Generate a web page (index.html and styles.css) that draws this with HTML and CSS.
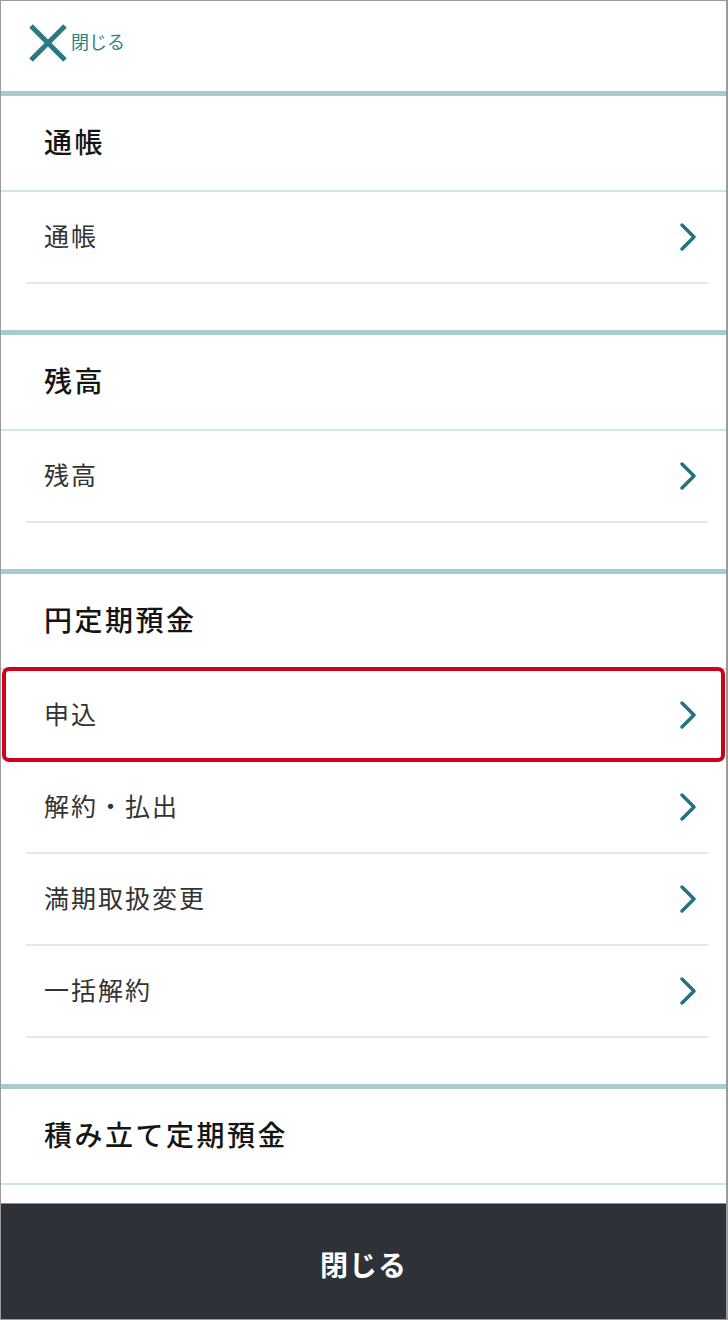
FILE: index.html
```html
<!DOCTYPE html>
<html lang="ja">
<head>
<meta charset="utf-8">
<link rel="stylesheet" href="styles.css">
</head>
<body>
<div class="frame">
  <div class="scroll">
    <div class="topbar">
      <a class="close-link">
        <svg class="close-x" width="40" height="38" viewBox="0 0 40 38"><path d="M3 2 L37 36 M37 2 L3 36" stroke="#2a7a84" stroke-width="5" fill="none"/></svg>
        <span class="close-text">閉じる</span>
      </a>
    </div>

    <section class="group">
      <h2 class="group-title">通帳</h2>
      <ul class="items">
        <li class="item"><span>通帳</span><svg class="chev" width="18" height="28" viewBox="0 0 18 28"><path d="M3 2 L15 14 L3 26" stroke="#23727d" stroke-width="3.4" fill="none" stroke-linecap="round" stroke-linejoin="round"/></svg></li>
      </ul>
    </section>

    <section class="group">
      <h2 class="group-title">残高</h2>
      <ul class="items">
        <li class="item"><span>残高</span><svg class="chev" width="18" height="28" viewBox="0 0 18 28"><path d="M3 2 L15 14 L3 26" stroke="#23727d" stroke-width="3.4" fill="none" stroke-linecap="round" stroke-linejoin="round"/></svg></li>
      </ul>
    </section>

    <section class="group">
      <h2 class="group-title">円定期預金</h2>
      <ul class="items">
        <li class="item"><span>申込</span><svg class="chev" width="18" height="28" viewBox="0 0 18 28"><path d="M3 2 L15 14 L3 26" stroke="#23727d" stroke-width="3.4" fill="none" stroke-linecap="round" stroke-linejoin="round"/></svg></li>
        <li class="item"><span>解約・払出</span><svg class="chev" width="18" height="28" viewBox="0 0 18 28"><path d="M3 2 L15 14 L3 26" stroke="#23727d" stroke-width="3.4" fill="none" stroke-linecap="round" stroke-linejoin="round"/></svg></li>
        <li class="item"><span>満期取扱変更</span><svg class="chev" width="18" height="28" viewBox="0 0 18 28"><path d="M3 2 L15 14 L3 26" stroke="#23727d" stroke-width="3.4" fill="none" stroke-linecap="round" stroke-linejoin="round"/></svg></li>
        <li class="item"><span>一括解約</span><svg class="chev" width="18" height="28" viewBox="0 0 18 28"><path d="M3 2 L15 14 L3 26" stroke="#23727d" stroke-width="3.4" fill="none" stroke-linecap="round" stroke-linejoin="round"/></svg></li>
      </ul>
    </section>

    <section class="group">
      <h2 class="group-title">積み立て定期預金</h2>
    </section>
  </div>

  <div class="bottombar">閉じる</div>

  <div class="highlight"></div>
</div>
</body>
</html>
```

FILE: styles.css
```css
* { box-sizing: border-box; }
html, body { margin: 0; padding: 0; background: #fff; }
body {
  font-family: "Noto Sans CJK JP", "Noto Sans", sans-serif;
}
.frame {
  position: relative;
  width: 728px;
  height: 1320px;
  border: 1px solid #9a9a9a;
  border-right-width: 2px;
  display: flex;
  flex-direction: column;
  overflow: hidden;
}
.scroll {
  flex: 1;
  overflow: hidden;
  border-bottom: 1px solid #8c8c8c;
}
.topbar {
  height: 90px;
  display: flex;
  align-items: flex-start;
  padding: 23px 0 0 27px;
}
.close-link {
  display: flex;
  align-items: center;
  gap: 3px;
  text-decoration: none;
}
.close-x { display: block; }
.close-text {
  color: #2b7f88;
  font-size: 18px;
  line-height: 1;
  margin-top: -5px;
}
.group {
  border-top: 5px solid #a5cdcd;
  padding-bottom: 46px;
}
.group-title {
  margin: 0;
  height: 96px;
  border-bottom: 2px solid #cfe4e4;
  display: flex;
  align-items: center;
  padding: 0 0 5px 43px;
  font-size: 28px;
  font-weight: 500;
  letter-spacing: 2.5px;
  color: #151515;
}
.items {
  list-style: none;
  margin: 0;
  padding: 0;
}
.item {
  height: 92px;
  margin: 0 18px 0 25px;
  border-bottom: 2px solid #e6e6e6;
  display: flex;
  align-items: center;
  justify-content: space-between;
  padding: 0 11px 0 18px;
  font-size: 25px;
  letter-spacing: 2px;
  color: #333;
}
.item span { margin-top: -4px; }
.chev { display: block; }
.bottombar {
  height: 115px;
  flex: none;
  background: #2e3138;
  color: #fff;
  display: flex;
  align-items: center;
  justify-content: center;
  font-size: 28px;
  font-weight: 700;
  letter-spacing: 1px;
  padding-top: 4px;
}
.highlight {
  position: absolute;
  left: 1px;
  top: 666px;
  width: 723px;
  height: 95px;
  border: 4px solid #d0021b;
  border-radius: 7px;
  pointer-events: none;
}
```
